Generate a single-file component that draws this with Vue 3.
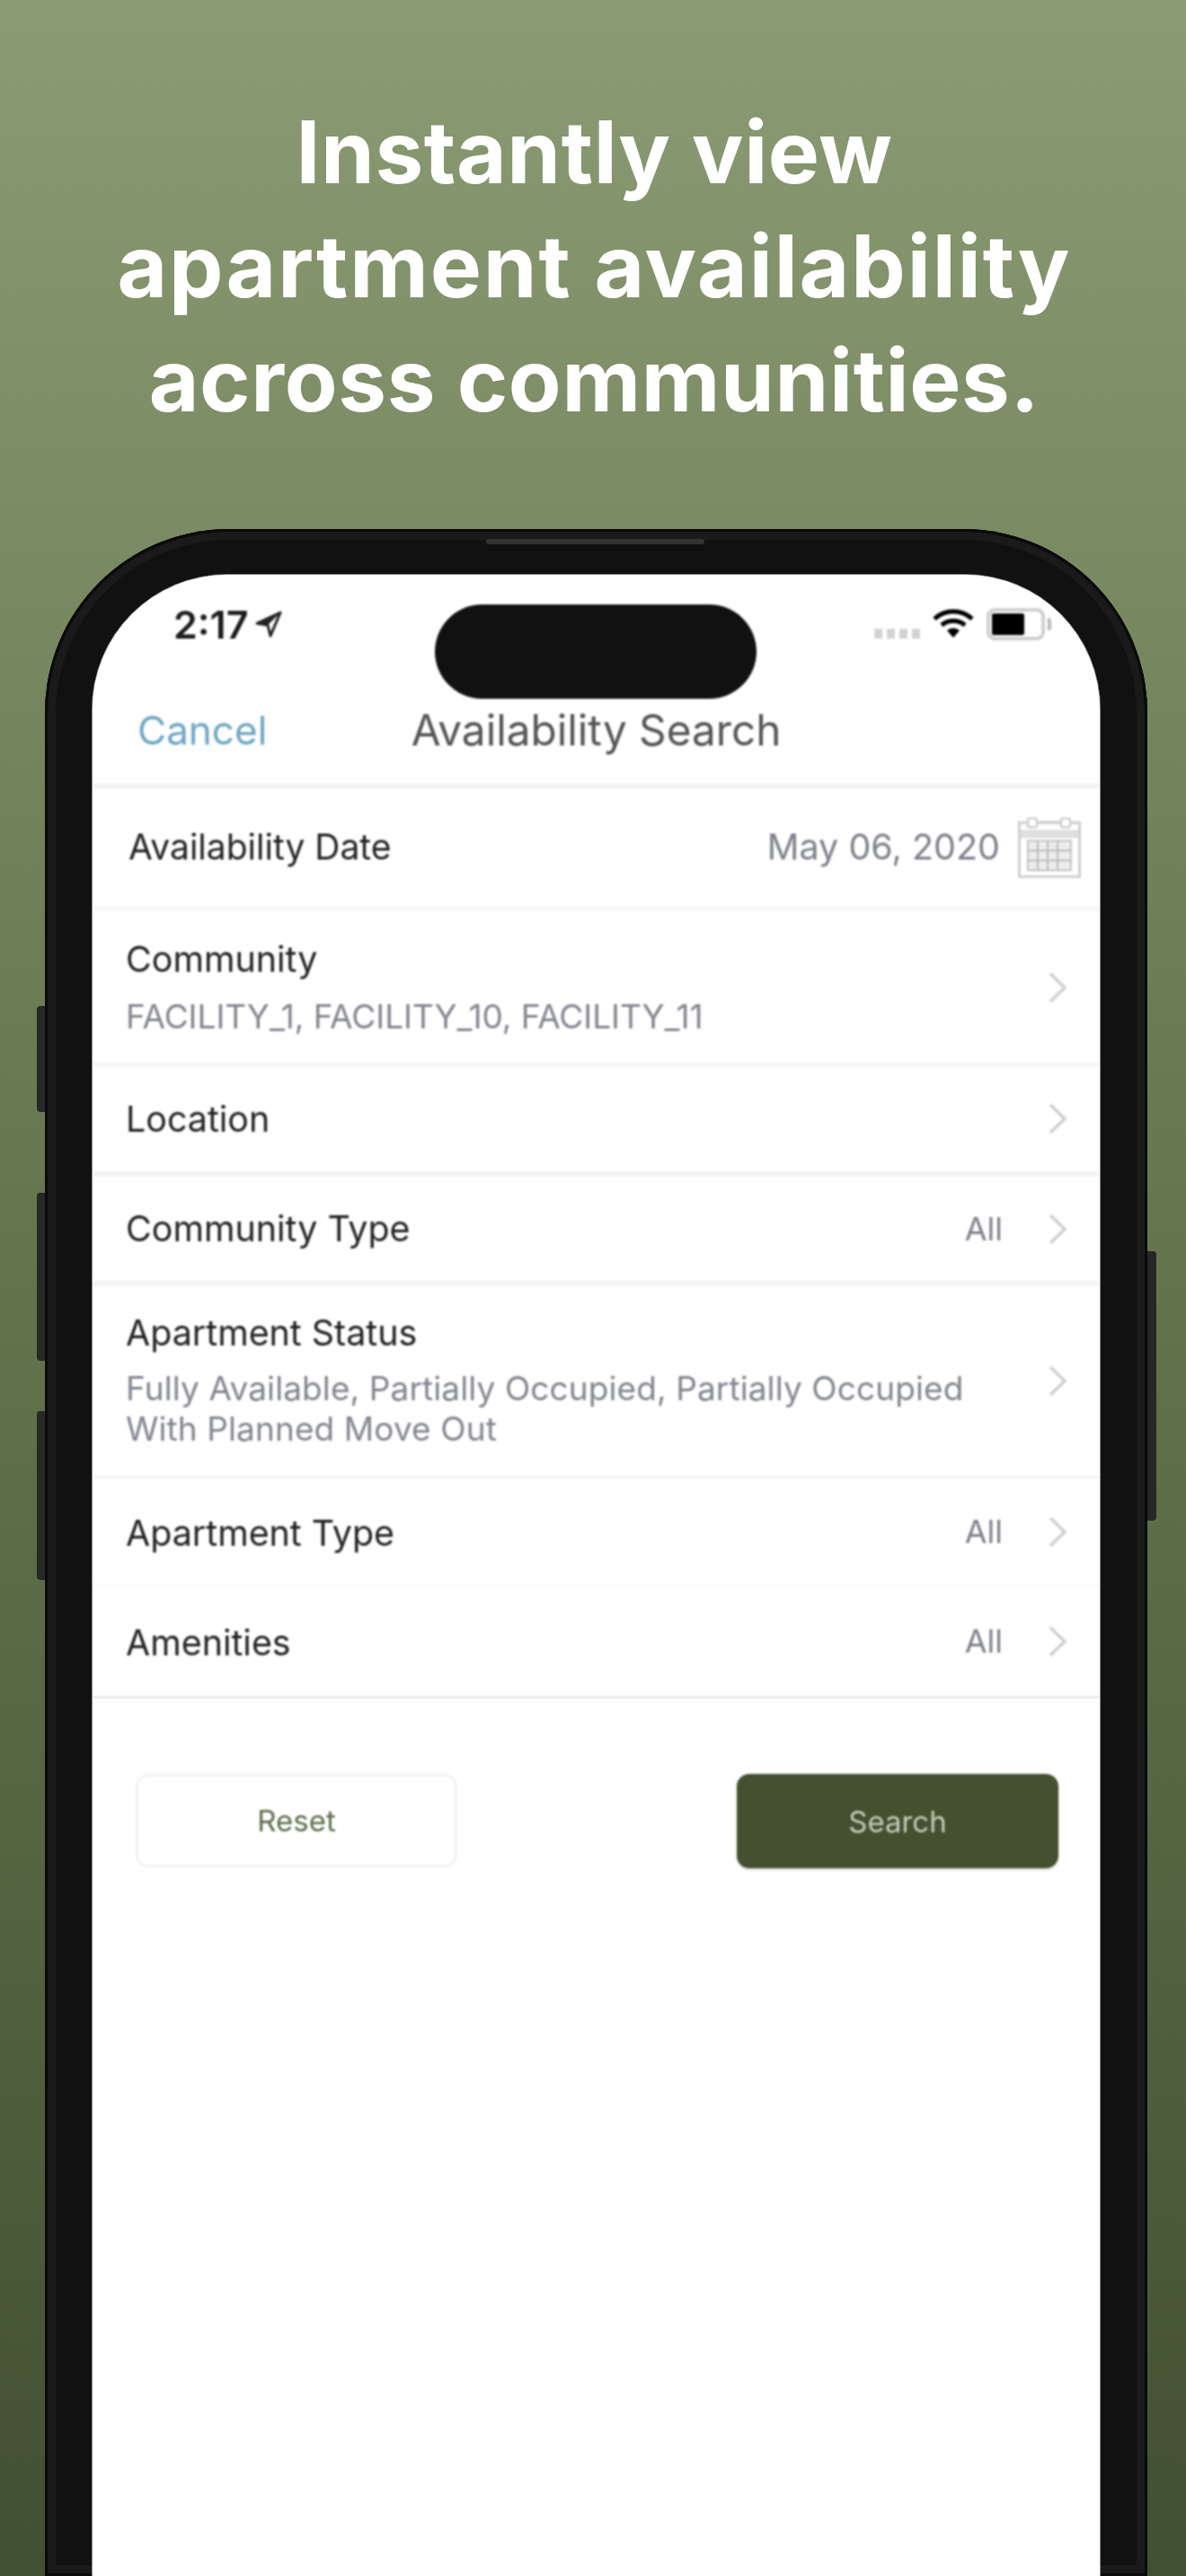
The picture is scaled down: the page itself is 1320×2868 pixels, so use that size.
<script setup>
const rows = [
  { label: 'Community', sub: 'FACILITY_1, FACILITY_10, FACILITY_11', cls: 'r-community' },
  { label: 'Location', cls: 'r-location' },
  { label: 'Community Type', value: 'All', cls: 'r-ctype' },
  { label: 'Apartment Status', sub: 'Fully Available, Partially Occupied, Partially Occupied With Planned Move Out', cls: 'r-status' },
  { label: 'Apartment Type', value: 'All', cls: 'r-atype' },
  { label: 'Amenities', value: 'All', cls: 'r-amenities' }
]
const gridV = [11, 22, 33]
const gridH = [11, 22]
</script>

<template>
  <div class="page">
    <h1 class="headline">
      <span class="line l-first">Instantly view</span>
      <span class="line l-wide">apartment availability</span>
      <span class="line l-last">across communities.</span>
    </h1>
    <div class="phone">
      <span class="side side-l1"></span>
      <span class="side side-l2"></span>
      <span class="side side-l3"></span>
      <span class="side side-r"></span>
      <span class="speaker"></span>
      <div class="screen">
        <div class="content">
          <div class="island"></div>
          <div class="status">
            <span class="time">2:17</span>
            <svg class="loc" viewBox="0 0 30 30">
              <path d="M28 2 2 14l12 2 3 12z" fill="none" stroke="#222" stroke-width="3" stroke-linejoin="round" />
              <path d="M28 2 2 14l12 2z" fill="#222" />
            </svg>
            <span class="status-right">
              <span class="dots"><i></i><i></i><i></i><i></i></span>
              <svg class="wifi" viewBox="0 0 46 32">
                <path d="M2 11A31 31 0 0 1 44 11" fill="none" stroke="#000" stroke-width="5" />
                <path d="M10 18A20 20 0 0 1 36 18" fill="none" stroke="#000" stroke-width="5" />
                <path d="M16 24A10 10 0 0 1 30 24L23 32Z" fill="#000" />
              </svg>
              <span class="battery"><i></i></span>
              <span class="nub"></span>
            </span>
          </div>
          <div class="nav">
            <span class="cancel">Cancel</span>
            <span class="title">Availability Search</span>
          </div>
          <div class="date-row">
            <span class="date-label">Availability Date</span>
            <span class="date-value">May 06, 2020</span>
            <svg class="cal" viewBox="0 0 70 68">
              <rect x="1.5" y="6" width="67" height="60" fill="none" stroke="#cfcfcf" stroke-width="3" />
              <path d="M16 5H48" stroke="#cfcfcf" stroke-width="2" />
              <rect x="11" y="1" width="10" height="10" rx="2" fill="#fff" stroke="#cfcfcf" stroke-width="2.5" />
              <rect x="48" y="1" width="10" height="10" rx="2" fill="#fff" stroke="#cfcfcf" stroke-width="2.5" />
              <rect x="3" y="14" width="64" height="9" fill="#dedede" />
              <rect x="11" y="26" width="48" height="33" fill="#ececec" stroke="#c6c6c6" stroke-width="2" />
              <path v-for="x in gridV" :key="x" :d="`M${11 + x} 26V59`" stroke="#bdbdbd" stroke-width="2" />
              <path v-for="y in gridH" :key="y" :d="`M11 ${26 + y}H59`" stroke="#bdbdbd" stroke-width="2" />
            </svg>
          </div>
          <div v-for="row in rows" :key="row.label" class="row" :class="row.cls">
            <div class="text">
              <div class="label">{{ row.label }}</div>
              <div v-if="row.sub" class="sub">{{ row.sub }}</div>
            </div>
            <span v-if="row.value" class="value">{{ row.value }}</span>
            <svg class="chev" viewBox="0 0 20 35">
              <path d="M2 2 18 17.500 2 33" fill="none" stroke="#cfcfd3" stroke-width="3.500" />
            </svg>
          </div>
          <div class="actions">
            <button class="btn reset">Reset</button>
            <button class="btn search">Search</button>
          </div>
        </div>
      </div>
    </div>
  </div>
</template>

<style>
html, body { margin: 0; padding: 0; }
</style>

<style scoped>
.page {
  width: 1320px;
  height: 2868px;
  overflow: hidden;
  display: flex;
  flex-direction: column;
  background: linear-gradient(180deg, #8b9b74 0%, #6f7f57 35%, #63734c 50%, #425032 100%);
  font-family: Inter, "Liberation Sans", sans-serif;
}
.headline {
  margin: 0;
  padding: 106px 0 0 3px;
  font-size: 96px;
  font-weight: 650;
  line-height: 127px;
  text-align: center;
  color: #fff;
}
.line { display: block; }
.l-first { letter-spacing: 0.6px; }
.l-wide { letter-spacing: 1.95px; }
.l-last { letter-spacing: 0.7px; }
.phone {
  position: relative;
  flex: 1;
  margin: 102px 43px 0 50px;
  padding: 51px 53px 0;
  background: #111;
  border-radius: 205px 205px 0 0;
  box-shadow: inset 0 0 0 3px #0a0a0a, inset 0 0 0 12px #1a1a1a;
  display: flex;
  min-height: 0;
}
.side {
  position: absolute;
  background: #272727;
}
.side-l1, .side-l2, .side-l3 { left: -9px; width: 9px; border-radius: 4px 0 0 4px; }
.side-l1 { top: 531px; height: 118px; }
.side-l2 { top: 739px; height: 187px; }
.side-l3 { top: 982px; height: 188px; }
.side-r { right: -10px; width: 10px; top: 804px; height: 300px; border-radius: 0 4px 4px 0; }
.speaker {
  position: absolute;
  left: 491px;
  top: 11px;
  width: 243px;
  height: 6px;
  border-radius: 3px;
  background: #333;
}
.screen {
  flex: 1;
  border-radius: 150px 150px 0 0;
  background: #fff;
  overflow: hidden;
  box-shadow: 0 0 0 1px #8a8a8a;
}
.content {
  position: relative;
  height: 100%;
  background: #fff;
  filter: blur(1.3px);
}
.island {
  position: absolute;
  left: 381px;
  top: 33px;
  width: 358px;
  height: 105px;
  border-radius: 53px;
  background: #111;
}
.status {
  height: 140px;
  box-sizing: border-box;
  padding: 30px 0 0 90px;
  display: flex;
  align-items: flex-start;
  color: #1c1c1c;
}
.time {
  font-size: 43px;
  font-weight: 600;
  line-height: 50px;
}
.loc {
  width: 30px;
  height: 30px;
  margin: 10px 0 0 8px;
}
.status-right {
  margin-left: auto;
  display: flex;
  align-items: flex-start;
  padding: 7px 54px 0 0;
}
.dots {
  display: flex;
  gap: 5px;
  margin: 23px 14px 0 0;
}
.dots i {
  width: 9px;
  height: 11px;
  background: #d2d2d2;
}
.wifi {
  width: 46px;
  height: 32px;
  margin: 1px 14px 0 0;
}
.battery {
  box-sizing: border-box;
  width: 65px;
  height: 36px;
  padding: 2px 19px 2px 2px;
  border: 4px solid #cfcfcf;
  border-radius: 9px;
  display: flex;
}
.battery i {
  flex: 1;
  background: #000;
  border-radius: 2px;
}
.nub {
  width: 4px;
  height: 14px;
  margin: 11px 0 0 3px;
  background: #bbb;
  border-radius: 0 3px 3px 0;
}
.nav {
  height: 92px;
  padding: 0 50px;
  border-bottom: 6px solid #f2f2f4;
  display: grid;
  grid-template-columns: 1fr auto 1fr;
  align-items: start;
}
.cancel {
  font-size: 44px;
  line-height: 66px;
  color: #6ea7c6;
}
.title {
  font-size: 47.700px;
  line-height: 66px;
  color: #555;
}
.date-row {
  box-sizing: border-box;
  height: 137px;
  padding: 0 21px 0 40px;
  border-bottom: 6px solid #f7f7f8;
  display: flex;
  align-items: center;
}
.date-label {
  font-size: 39px;
  margin-top: -2px;
  color: #222;
}
.date-value {
  margin-left: auto;
  margin-top: -2px;
  font-size: 39.500px;
  color: #7e8189;
}
.cal {
  width: 70px;
  height: 68px;
  margin-left: 20px;
}
.row {
  box-sizing: border-box;
  padding: 0 37px;
  border-bottom: 4px solid #f3f3f5;
  display: flex;
  align-items: center;
}
.r-community { height: 172px; }
.r-location { height: 123px; border-bottom-width: 6px; }
.r-ctype { height: 122px; border-bottom-width: 6px; }
.r-status { height: 214px; border-bottom-width: 3px; }
.r-atype { height: 120px; border-bottom-width: 2px; border-bottom-color: #f7f7f8; }
.r-amenities { height: 125px; border-bottom-width: 3px; border-bottom-color: #e8e8ec; }
.r-atype .label, .r-amenities .label { margin-top: 3px; }
.text {
  flex: 1;
  min-width: 0;
  padding-right: 60px;
}
.label {
  font-size: 39.400px;
  line-height: 46px;
  color: #222;
}
.sub {
  margin-top: 18px;
  font-size: 37px;
  line-height: 45px;
  color: #82858d;
}
.r-community .sub { letter-spacing: -0.05px; }
.r-status .text { margin-top: -1px; }
.r-status .sub { margin-top: 16px; letter-spacing: 0.1px; }
.value {
  margin-right: 51px;
  font-size: 36px;
  color: #7e8189;
}
.chev {
  width: 20px;
  height: 35px;
  flex: none;
}
.actions {
  display: flex;
  justify-content: space-between;
  padding: 84px 46px 0 48px;
}
.btn {
  width: 358px;
  height: 104px;
  box-sizing: border-box;
  font-family: inherit;
  font-size: 33px;
  border-radius: 14px;
  padding: 0;
}
.reset {
  background: #fff;
  border: 3px solid #f2f2f2;
  color: #5f6e4c;
}
.search {
  height: 105px;
  background: #445030;
  border: 0;
  color: #c5ccb8;
  box-shadow: 0 2px 3px rgba(0, 0, 0, 0.15);
}
</style>
